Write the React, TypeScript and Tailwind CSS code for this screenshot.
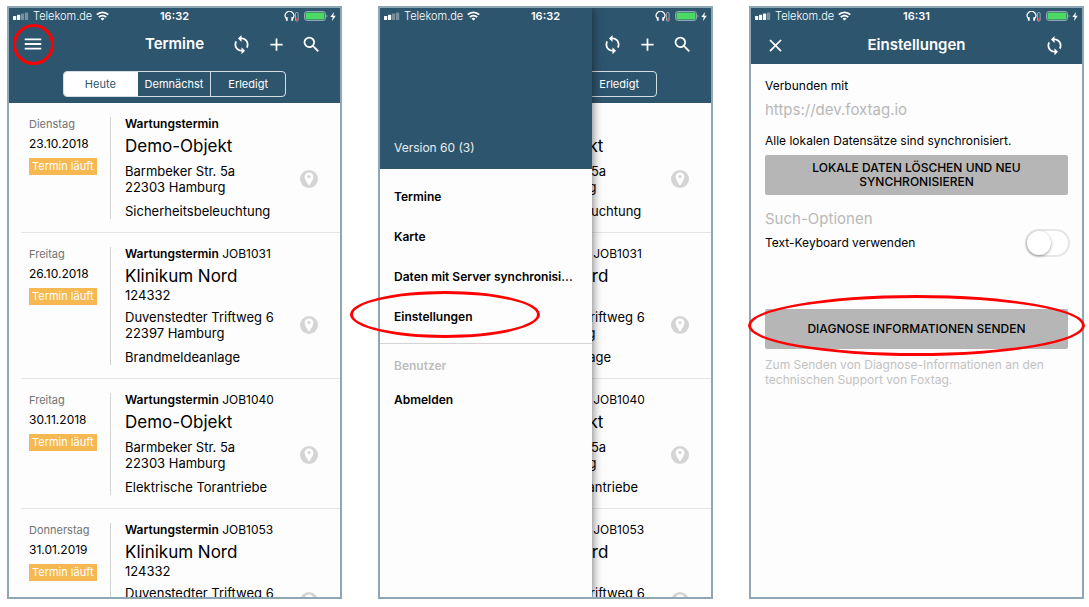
import type { ReactNode } from "react";
import { MdAdd, MdClose, MdMenu, MdSearch, MdSync } from "react-icons/md";

interface Appointment {
    day: string;
    date: string;
    job?: string;
    title: string;
    number?: string;
    street: string;
    city: string;
    type: string;
}

const appointments: Appointment[] = [
    { day: "Dienstag", date: "23.10.2018", title: "Demo-Objekt", street: "Barmbeker Str. 5a", city: "22303 Hamburg", type: "Sicherheitsbeleuchtung" },
    { day: "Freitag", date: "26.10.2018", job: "JOB1031", title: "Klinikum Nord", number: "124332", street: "Duvenstedter Triftweg 6", city: "22397 Hamburg", type: "Brandmeldeanlage" },
    { day: "Freitag", date: "30.11.2018", job: "JOB1040", title: "Demo-Objekt", street: "Barmbeker Str. 5a", city: "22303 Hamburg", type: "Elektrische Torantriebe" },
    { day: "Donnerstag", date: "31.01.2019", job: "JOB1053", title: "Klinikum Nord", number: "124332", street: "Duvenstedter Triftweg 6", city: "22397 Hamburg", type: "Brandmeldeanlage" },
];

export default function App() {
    return (
        <div className="grid h-screen grid-cols-3 gap-9 overflow-hidden bg-white pt-[6px] pr-[5px] pb-2 pl-[7px] font-['Inter','Liberation_Sans',sans-serif] text-black">
            <Phone mark={<Mark className="top-[18px] left-[6px] h-[41px] w-[41px]" />}>
                <StatusBar time="16:32" bars={2} />
                <TermineScreen />
            </Phone>
            <Phone mark={<Mark className="top-[285px] -left-7 h-[47px] w-[190px]" />}>
                <StatusBar time="16:32" bars={2} />
                <TermineScreen />
                <Drawer />
            </Phone>
            <Phone mark={<Mark className="-inset-x-px top-[289px] h-[61px]" />}>
                <StatusBar time="16:31" bars={3} />
                <SettingsScreen />
            </Phone>
        </div>
    )
}

function Phone({ mark, children }: { mark: ReactNode, children: ReactNode }) {
    return (
        <div className="relative min-h-0 min-w-0">
            <div className="relative flex h-full flex-col overflow-hidden border-2 border-[#8fa6b5] bg-[#fdfdfd]">
                {children}
            </div>
            {mark}
        </div>
    )
}

// red ellipse that points at the next step
function Mark({ className }: { className: string }) {
    return <div className={`pointer-events-none absolute z-20 rounded-[50%] border-3 border-[#ff0000] ${className}`} />
}

// lies over the header and over the open drawer
function StatusBar({ time, bars }: { time: string, bars: number }) {
    return (
        <div className="absolute inset-x-0 top-0 z-10 grid h-4 grid-cols-[1fr_auto_1fr] items-center px-1 text-white">
            <div className="flex items-center gap-1">
                <svg viewBox="0 0 16 8" className="h-2 w-4" fill="currentColor">
                    {[0, 1, 2, 3].map((i) => (
                        <rect key={i} x={i * 4} y={4 - i * 1.2} width="3.2" height={4 + i * 1.2} rx="0.6" opacity={i < bars ? 1 : 0.35} />
                    ))}
                </svg>
                <span className="text-[11px] font-light">Telekom.de</span>
                <svg viewBox="0 0 14 10" className="h-[10px] w-[13px]" fill="none" stroke="currentColor" strokeWidth="2">
                    <path d="M0.8 3.6 A9 9 0 0 1 13.2 3.6" />
                    <path d="M3 6.2 A6 6 0 0 1 11 6.2" />
                    <path d="M7 9.8 L4.9 7.9 A3 3 0 0 1 9.1 7.9 Z" fill="currentColor" stroke="none" />
                </svg>
            </div>
            <span className="text-[11px] font-semibold">{time}</span>
            <div className="flex items-center justify-end gap-px">
                <svg viewBox="0 0 15 11" className="mr-1 h-[11px] w-[15px]" fill="none" stroke="currentColor">
                    <path d="M2.2 7.4 A4.3 4.3 0 1 1 8.8 7.4" strokeWidth="1.2" />
                    <path d="M2.8 6.2 V9.8 M8.2 6.2 V9.8" strokeWidth="1.8" />
                    <rect x="11.5" y="1.5" width="2.6" height="8.6" rx="1" strokeWidth="0.7" opacity="0.7" />
                    <path d="M12.8 7 V9.8" stroke="#ef4444" strokeWidth="1.6" />
                </svg>
                <svg viewBox="0 0 24 10" className="h-[10px] w-6">
                    <rect x="0.5" y="0.5" width="21" height="9" rx="2.4" fill="none" stroke="#8fa6b4" />
                    <rect x="1.5" y="1.5" width="19" height="7" rx="1.2" fill="#4cd964" />
                    <path d="M22.5 3.4 C23.8 4 23.8 6 22.5 6.6 Z" fill="#8fa6b4" />
                </svg>
                <svg viewBox="0 0 6 9" className="ml-px h-[9px] w-[6px]" fill="currentColor">
                    <path d="M4 0 L0.3 5 H2.7 L2 9 L5.8 3.8 H3.3 Z" />
                </svg>
            </div>
        </div>
    )
}

function TermineScreen() {
    return (
        <>
            <header className="shrink-0 bg-[#2e556e] pt-[18px] pb-[6px] text-white">
                <div className="grid h-9 grid-cols-[1fr_auto_1fr] items-center px-[13px]">
                    <button aria-label="Menü" className="w-fit"><MdMenu size={22} /></button>
                    <h1 className="text-[15px] font-semibold">Termine</h1>
                    <div className="flex justify-end gap-[14px] pr-[5px]">
                        <button aria-label="Synchronisieren"><MdSync size={21} /></button>
                        <button aria-label="Hinzufügen"><MdAdd size={21} /></button>
                        <button aria-label="Suchen"><MdSearch size={21} /></button>
                    </div>
                </div>
                <div className="mx-[54px] mt-[9px] grid h-[26px] grid-cols-3 divide-x divide-white/80 overflow-hidden rounded-sm border border-white/80 text-[11px]">
                    <button className="bg-white text-[#2e556e]">Heute</button>
                    <button>Demnächst</button>
                    <button>Erledigt</button>
                </div>
            </header>
            <main className="min-h-0 flex-1 overflow-hidden">
                {appointments.map((a) => <AppointmentRow key={a.date} {...a} />)}
            </main>
        </>
    )
}

function AppointmentRow({ day, date, job, title, number, street, city, type }: Appointment) {
    return (
        <div className="ml-3 flex border-b border-neutral-200 pt-[14px] pb-[13px] pl-2">
            <div className="w-[81px] shrink-0 text-[11px] leading-[14px]">
                <div className="text-neutral-500">{day}</div>
                <div className="mt-[6px] text-xs leading-[14px]">{date}</div>
                <div className="mt-[7px] w-fit bg-[#f6b850] px-[3px] pt-px pb-0.5 text-white">Termin läuft</div>
            </div>
            <div className="min-w-0 flex-1 border-l border-neutral-300 pl-[14px] text-[13px] leading-4">
                <div className="text-xs leading-[14px]"><b className="font-semibold">Wartungstermin</b> {job}</div>
                <div className="mt-1 text-[17px] leading-[22px]">{title}</div>
                {number && <div>{number}</div>}
                <div className="mt-[6px] flex items-center justify-between pr-[22px]">
                    <div>
                        <div>{street}</div>
                        <div>{city}</div>
                    </div>
                    <PinIcon />
                </div>
                <div className="mt-2">{type}</div>
            </div>
        </div>
    )
}

function PinIcon() {
    return (
        <svg viewBox="0 0 18 18" className="h-[18px] w-[18px] shrink-0">
            <circle cx="9" cy="9" r="9" fill="#d4d4d4" />
            <path d="M9 2.4 C6.4 2.4 4.6 4.3 4.6 6.7 C4.6 9.8 9 15.6 9 15.6 S13.4 9.8 13.4 6.7 C13.4 4.3 11.6 2.4 9 2.4 Z" fill="#fff" />
            <circle cx="9" cy="6.6" r="1.6" fill="#d4d4d4" />
        </svg>
    )
}

function Drawer() {
    return (
        <nav className="absolute inset-y-0 left-0 w-[212px] bg-[#fdfdfd] text-xs font-semibold shadow-[0_0_10px_rgba(0,0,0,0.6)]">
            <div className="flex h-[161px] items-end bg-[#2e556e] px-[14px] pb-[13px] font-normal text-white/90">Version 60 (3)</div>
            <div className="flex flex-col border-b border-neutral-300 pt-2 pb-[6px]">
                <a href="#termine" className="px-[14px] leading-10">Termine</a>
                <a href="#karte" className="px-[14px] leading-10">Karte</a>
                <a href="#sync" className="px-[14px] leading-10 whitespace-nowrap">Daten mit Server synchronisi...</a>
                <a href="#einstellungen" className="px-[14px] leading-10">Einstellungen</a>
            </div>
            <div className="px-[14px] pt-3 leading-5 text-[#bdbdbd]">Benutzer</div>
            <a href="#abmelden" className="block px-[14px] pt-1 leading-10">Abmelden</a>
        </nav>
    )
}

function SettingsScreen() {
    return (
        <>
            <header className="shrink-0 bg-[#2e556e] px-[14px] pt-[18px] text-white">
                <div className="grid h-[38px] grid-cols-[1fr_auto_1fr] items-center">
                    <button aria-label="Schließen" className="w-fit"><MdClose size={21} /></button>
                    <h1 className="text-[15px] font-semibold">Einstellungen</h1>
                    <button aria-label="Synchronisieren" className="mr-[3px] justify-self-end"><MdSync size={21} /></button>
                </div>
            </header>
            <main className="flex flex-1 flex-col px-[14px] pt-[14px] text-xs leading-4">
                <p>Verbunden mit</p>
                <p className="mt-[6px] text-[15px] leading-5 text-[#b8b8b8]">https://dev.foxtag.io</p>
                <p className="mt-[13px]">Alle lokalen Datensätze sind synchronisiert.</p>
                <button className="mt-[6px] h-10 rounded-xs bg-[#b6b6b6] px-10 text-xs leading-[14px] font-medium">LOKALE DATEN LÖSCHEN UND NEU SYNCHRONISIEREN</button>
                <h2 className="mt-[14px] text-[15px] leading-5 text-[#b8b8b8]">Such-Optionen</h2>
                <label className="flex h-7 items-center justify-between">
                    Text-Keyboard verwenden
                    <input type="checkbox" role="switch" className="-mr-[2px] h-7 w-[45px] appearance-none rounded-full border-2 border-[#e6e6e6] bg-white before:block before:h-6 before:w-6 before:rounded-full before:bg-white before:shadow-[0_1px_3px_rgba(0,0,0,0.4)] checked:bg-green-500 checked:before:ml-auto" />
                </label>
                <button className="mt-[52px] h-10 rounded-xs bg-[#b6b6b6] text-xs font-medium">DIAGNOSE INFORMATIONEN SENDEN</button>
                <p className="mt-2 leading-[15px] text-[#c2c2c2]">Zum Senden von Diagnose-Informationen an den technischen Support von Foxtag.</p>
            </main>
        </>
    )
}
